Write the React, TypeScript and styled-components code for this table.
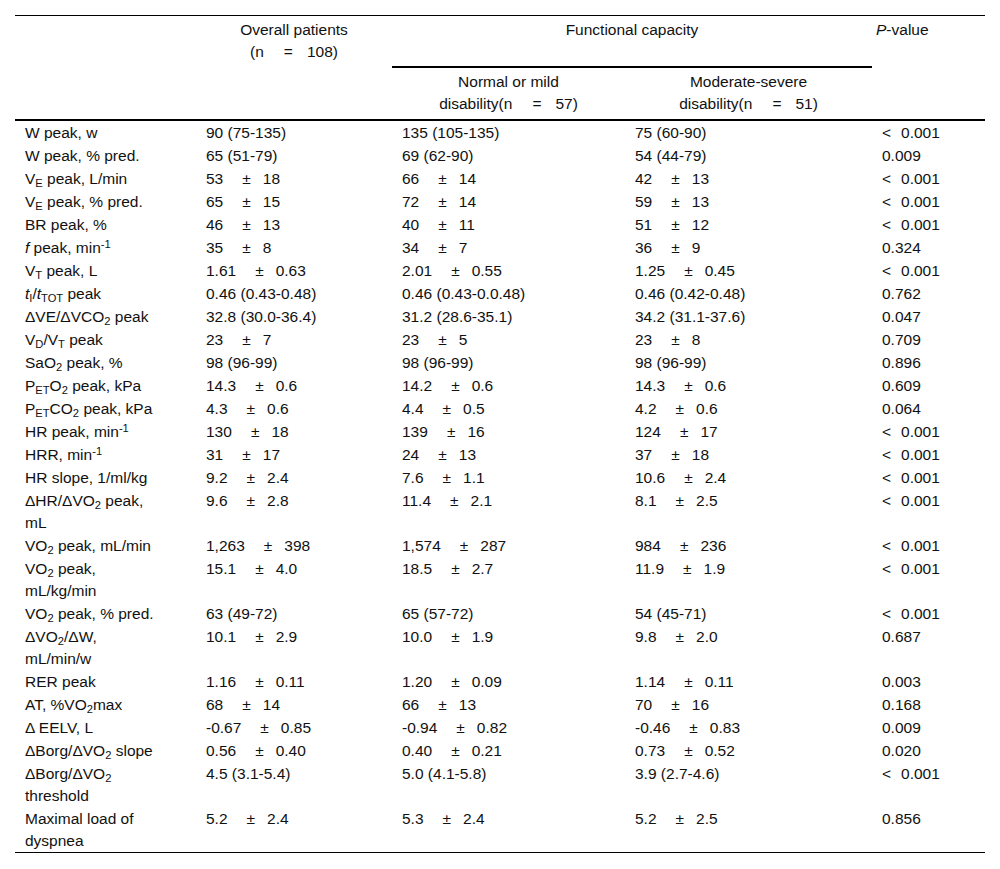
import React from "react";
import styled, { createGlobalStyle } from "styled-components";

const GlobalStyle = createGlobalStyle`
  html, body { margin: 0; padding: 0; background: #ffffff; }
  body { font-family: "Liberation Sans", Arial, sans-serif; color: #111; }
`;

const Page = styled.div`
  padding: 15px 15px 15px 15px;
  width: 970px;
`;

const Table = styled.table`
  width: 970px;
  table-layout: fixed;
  border-collapse: collapse;
  font-size: 15.5px;
  line-height: 22px;
  border-top: 1px solid #000;
  border-bottom: 1px solid #000;
`;

const Head = styled.thead`
  border-bottom: 2px solid #000;
`;

const Th = styled.th<{ $align?: "left" | "center"; $rule?: boolean }>`
  font-weight: normal;
  vertical-align: top;
  text-align: ${(p) => p.$align ?? "center"};
  padding: 3px 10px 4px 10px;
  border-bottom: ${(p) => (p.$rule ? "2px solid #000" : "none")};
`;

const PTh = styled(Th)`
  padding-left: 4px;
`;

const Td = styled.td`
  vertical-align: top;
  text-align: left;
  padding: 0.5px 4px 0.5px 10px;
  white-space: nowrap;
`;

const Sub = styled.sub`
  font-size: 0.72em;
  line-height: 0;
  vertical-align: -0.3em;
`;

const Sup = styled.sup`
  font-size: 0.72em;
  line-height: 0;
  vertical-align: 0.45em;
`;

const Pm = styled.span`
  margin: 0 12px 0 19px;
`;

const Lt = styled.span`
  margin-right: 10px;
`;

const Eq = styled.span`
  margin: 0 14px 0 20px;
`;

type Val = string | [string, string];
type PVal = string | { lt: string };

interface Row {
  label: React.ReactNode;
  all: Val;
  normal: Val;
  mod: Val;
  p: PVal;
}

const lt = (v: string) => ({ lt: v });

const rows: Row[] = [
  { label: <>W peak, w</>, all: "90 (75-135)", normal: "135 (105-135)", mod: "75 (60-90)", p: lt("0.001") },
  { label: <>W peak, % pred.</>, all: "65 (51-79)", normal: "69 (62-90)", mod: "54 (44-79)", p: "0.009" },
  { label: <>V<Sub>E</Sub> peak, L/min</>, all: ["53", "18"], normal: ["66", "14"], mod: ["42", "13"], p: lt("0.001") },
  { label: <>V<Sub>E</Sub> peak, % pred.</>, all: ["65", "15"], normal: ["72", "14"], mod: ["59", "13"], p: lt("0.001") },
  { label: <>BR peak, %</>, all: ["46", "13"], normal: ["40", "11"], mod: ["51", "12"], p: lt("0.001") },
  { label: <><i>f</i> peak, min<Sup>-1</Sup></>, all: ["35", "8"], normal: ["34", "7"], mod: ["36", "9"], p: "0.324" },
  { label: <>V<Sub>T</Sub> peak, L</>, all: ["1.61", "0.63"], normal: ["2.01", "0.55"], mod: ["1.25", "0.45"], p: lt("0.001") },
  { label: <><i>t</i><Sub>I</Sub>/<i>t</i><Sub>TOT</Sub> peak</>, all: "0.46 (0.43-0.48)", normal: "0.46 (0.43-0.0.48)", mod: "0.46 (0.42-0.48)", p: "0.762" },
  { label: <>ΔVE/ΔVCO<Sub>2</Sub> peak</>, all: "32.8 (30.0-36.4)", normal: "31.2 (28.6-35.1)", mod: "34.2 (31.1-37.6)", p: "0.047" },
  { label: <>V<Sub>D</Sub>/V<Sub>T</Sub> peak</>, all: ["23", "7"], normal: ["23", "5"], mod: ["23", "8"], p: "0.709" },
  { label: <>SaO<Sub>2</Sub> peak, %</>, all: "98 (96-99)", normal: "98 (96-99)", mod: "98 (96-99)", p: "0.896" },
  { label: <>P<Sub>ET</Sub>O<Sub>2</Sub> peak, kPa</>, all: ["14.3", "0.6"], normal: ["14.2", "0.6"], mod: ["14.3", "0.6"], p: "0.609" },
  { label: <>P<Sub>ET</Sub>CO<Sub>2</Sub> peak, kPa</>, all: ["4.3", "0.6"], normal: ["4.4", "0.5"], mod: ["4.2", "0.6"], p: "0.064" },
  { label: <>HR peak, min<Sup>-1</Sup></>, all: ["130", "18"], normal: ["139", "16"], mod: ["124", "17"], p: lt("0.001") },
  { label: <>HRR, min<Sup>-1</Sup></>, all: ["31", "17"], normal: ["24", "13"], mod: ["37", "18"], p: lt("0.001") },
  { label: <>HR slope, 1/ml/kg</>, all: ["9.2", "2.4"], normal: ["7.6", "1.1"], mod: ["10.6", "2.4"], p: lt("0.001") },
  { label: <>ΔHR/ΔVO<Sub>2</Sub> peak,<br />mL</>, all: ["9.6", "2.8"], normal: ["11.4", "2.1"], mod: ["8.1", "2.5"], p: lt("0.001") },
  { label: <>VO<Sub>2</Sub> peak, mL/min</>, all: ["1,263", "398"], normal: ["1,574", "287"], mod: ["984", "236"], p: lt("0.001") },
  { label: <>VO<Sub>2</Sub> peak,<br />mL/kg/min</>, all: ["15.1", "4.0"], normal: ["18.5", "2.7"], mod: ["11.9", "1.9"], p: lt("0.001") },
  { label: <>VO<Sub>2</Sub> peak, % pred.</>, all: "63 (49-72)", normal: "65 (57-72)", mod: "54 (45-71)", p: lt("0.001") },
  { label: <>ΔVO<Sub>2</Sub>/ΔW,<br />mL/min/w</>, all: ["10.1", "2.9"], normal: ["10.0", "1.9"], mod: ["9.8", "2.0"], p: "0.687" },
  { label: <>RER peak</>, all: ["1.16", "0.11"], normal: ["1.20", "0.09"], mod: ["1.14", "0.11"], p: "0.003" },
  { label: <>AT, %VO<Sub>2</Sub>max</>, all: ["68", "14"], normal: ["66", "13"], mod: ["70", "16"], p: "0.168" },
  { label: <>Δ EELV, L</>, all: ["-0.67", "0.85"], normal: ["-0.94", "0.82"], mod: ["-0.46", "0.83"], p: "0.009" },
  { label: <>ΔBorg/ΔVO<Sub>2</Sub> slope</>, all: ["0.56", "0.40"], normal: ["0.40", "0.21"], mod: ["0.73", "0.52"], p: "0.020" },
  { label: <>ΔBorg/ΔVO<Sub>2</Sub><br />threshold</>, all: "4.5 (3.1-5.4)", normal: "5.0 (4.1-5.8)", mod: "3.9 (2.7-4.6)", p: lt("0.001") },
  { label: <>Maximal load of<br />dyspnea</>, all: ["5.2", "2.4"], normal: ["5.3", "2.4"], mod: ["5.2", "2.5"], p: "0.856" },
];

const Value: React.FC<{ v: Val }> = ({ v }) =>
  typeof v === "string" ? (
    <>{v}</>
  ) : (
    <>
      {v[0]}
      <Pm>±</Pm>
      {v[1]}
    </>
  );

const PValue: React.FC<{ p: PVal }> = ({ p }) =>
  typeof p === "string" ? (
    <>{p}</>
  ) : (
    <>
      <Lt>&lt;</Lt>
      {p.lt}
    </>
  );

const N: React.FC<{ n: string }> = ({ n }) => (
  <>
    (n<Eq>=</Eq>
    {n})
  </>
);

export default function App() {
  return (
    <>
      <GlobalStyle />
      <Page>
        <Table>
          <colgroup>
            <col style={{ width: 181 }} />
            <col style={{ width: 196 }} />
            <col style={{ width: 233 }} />
            <col style={{ width: 247 }} />
            <col style={{ width: 113 }} />
          </colgroup>
          <Head>
            <tr>
              <Th rowSpan={2} />
              <Th>
                Overall patients
                <br />
                <N n="108" />
              </Th>
              <Th colSpan={2} $rule>
                Functional capacity
              </Th>
              <PTh rowSpan={2} $align="left">
                <i>P</i>-value
              </PTh>
            </tr>
            <tr>
              <Th />
              <Th>
                Normal or mild
                <br />
                disability<N n="57" />
              </Th>
              <Th>
                Moderate-severe
                <br />
                disability<N n="51" />
              </Th>
            </tr>
          </Head>
          <tbody>
            {rows.map((r, i) => (
              <tr key={i}>
                <Td>{r.label}</Td>
                <Td>
                  <Value v={r.all} />
                </Td>
                <Td>
                  <Value v={r.normal} />
                </Td>
                <Td>
                  <Value v={r.mod} />
                </Td>
                <Td>
                  <PValue p={r.p} />
                </Td>
              </tr>
            ))}
          </tbody>
        </Table>
      </Page>
    </>
  );
}
